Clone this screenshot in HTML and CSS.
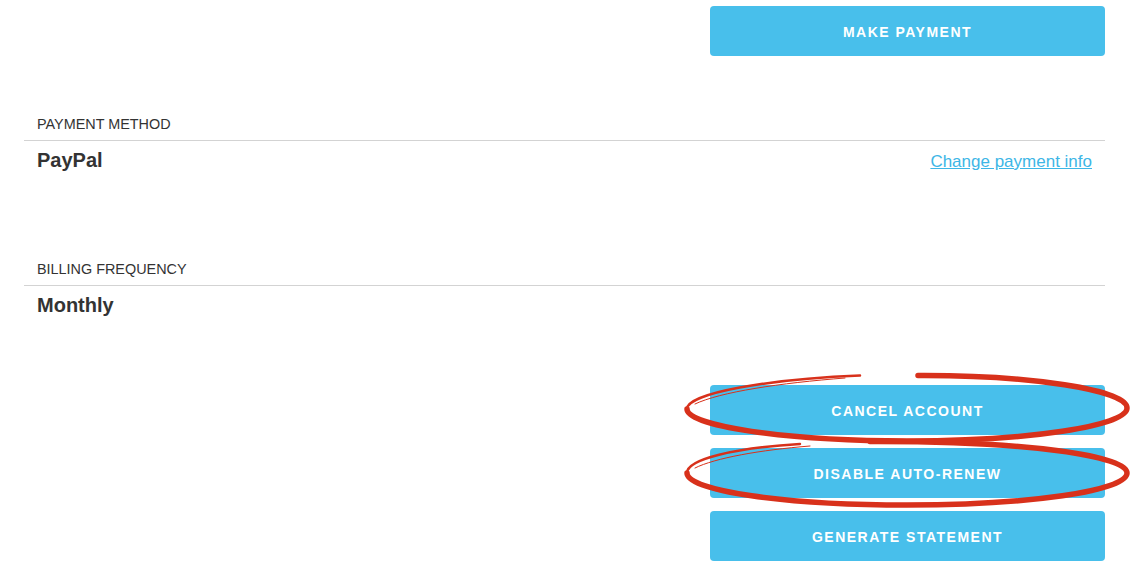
FILE: index.html
```html
<!DOCTYPE html>
<html lang="en">
<head>
  <meta charset="UTF-8">
  <title>Account billing</title>
  <link rel="stylesheet" href="styles.css">
</head>
<body>
  <div class="account">
    <div class="actions first">
      <button class="btn">MAKE PAYMENT</button>
    </div>

    <section class="field method">
      <div class="field-label">PAYMENT METHOD</div>
      <div class="field-row">
        <span class="field-value">PayPal</span>
        <a href="#" class="field-link">Change payment info</a>
      </div>
    </section>

    <section class="field frequency">
      <div class="field-label">BILLING FREQUENCY</div>
      <div class="field-row">
        <span class="field-value">Monthly</span>
      </div>
    </section>

    <div class="actions stack">
      <button class="btn">CANCEL ACCOUNT</button>
      <button class="btn">DISABLE AUTO-RENEW</button>
      <button class="btn">GENERATE STATEMENT</button>
    </div>
  </div>

  <!-- hand drawn red circles over the two buttons -->
  <svg class="marks" width="1130" height="577" viewBox="0 0 1130 577">
    <g fill="none" stroke="#d8311b" stroke-linecap="round">
      <path stroke-width="5.5" d="M918 375.5 C1030 375 1127 390 1127 408 C1127 426 1028 441 907 441 C786 441 687 426 687 409"/>
      <path stroke-width="2.5" d="M687 409 C687 393 770 379 860 375.5"/>
      <path stroke-width="1" d="M695 404 C720 392 780 383 845 378"/>

      <path stroke-width="5.5" d="M870 441.5 C1030 441 1127 456 1127 473 C1127 491 1028 505 907 505 C786 505 687 491 687 473"/>
      <path stroke-width="2.5" d="M687 473 C687 459 735 448 800 444"/>
      <path stroke-width="1" d="M695 468 C715 458 760 450 810 446"/>
    </g>
  </svg>
</body>
</html>
```

FILE: styles.css
```css
body {
  margin: 0;
  position: relative;
  font-family: "Liberation Sans", Arial, sans-serif;
  color: #333;
  background: #fff;
}
.account {
  margin-left: 24px;
  width: 1081px;
}
.actions {
  display: flex;
  flex-direction: column;
  align-items: flex-end;
  gap: 13px;
}
.actions.first {
  padding-top: 6px;
}
.actions.stack {
  margin-top: 68px;
}
.btn {
  width: 395px;
  height: 50px;
  padding: 2px 0 0;
  border: none;
  border-radius: 4px;
  background-color: #48bfeb;
  color: #fff;
  font-family: "Liberation Sans", Arial, sans-serif;
  font-size: 14px;
  font-weight: bold;
  letter-spacing: 1.5px;
  cursor: pointer;
}
.field.method {
  margin-top: 60px;
}
.field.frequency {
  margin-top: 87px;
}
.field-label {
  font-size: 14.4px;
  line-height: 16px;
  padding: 0 13px 8px;
  border-bottom: 1px solid #d3d3d3;
}
.field-row {
  display: flex;
  justify-content: space-between;
  align-items: baseline;
  padding: 7px 13px 0;
  line-height: 24px;
}
.field-value {
  font-size: 20px;
  font-weight: bold;
}
.field-link {
  font-size: 17px;
  color: #3db6e6;
  text-decoration: underline;
}
.marks {
  position: absolute;
  left: 0;
  top: 0;
  pointer-events: none;
}
```
